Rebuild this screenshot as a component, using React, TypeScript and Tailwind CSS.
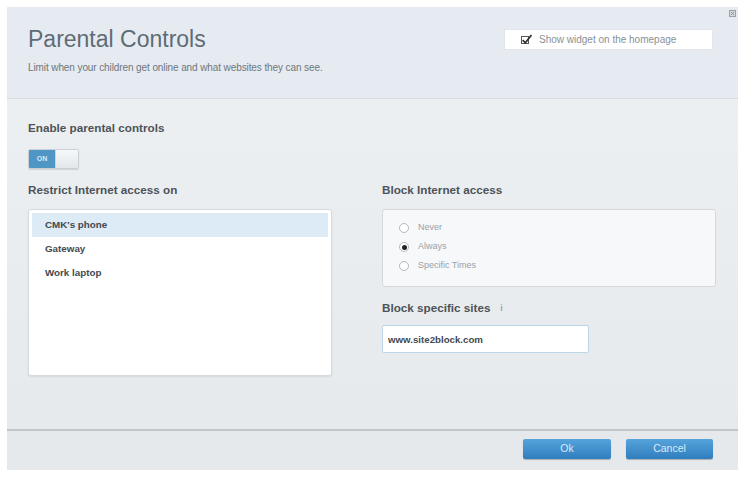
import React, { useState } from 'react'

const devices = ["CMK's phone", 'Gateway', 'Work laptop']
const blockOptions = ['Never', 'Always', 'Specific Times']

export default function App() {
  const [enabled, setEnabled] = useState(true)
  const [selected, setSelected] = useState(0)
  const [block, setBlock] = useState('Always')
  const [showWidget, setShowWidget] = useState(true)
  const [site, setSite] = useState('www.site2block.com')

  return (
    <div className="w-[746px] h-[481px] bg-white pt-[7px] pl-[7px] font-['Liberation_Sans',Arial,sans-serif]">
      <div className="relative w-[731px] h-[463px] flex flex-col bg-gradient-to-b from-[#eef1f3] to-[#e6e9ec]">
        {/* header */}
        <div className="relative h-[92px] shrink-0 bg-[#e5ebf0] border-b border-[#d6dce1] pl-[21px] pt-[19px]">
          <h1 className="text-[23px] leading-[27px] text-[#5f6b77]">Parental Controls</h1>
          <p className="mt-[9px] text-[10px] leading-[12px] tracking-[-0.1px] text-[#6f767d]">
            Limit when your children get online and what websites they can see.
          </p>
          <label className="absolute left-[497px] top-[22px] w-[209px] h-[21px] bg-white border border-[#e2e6ea] flex items-center pl-[16px] gap-[10px] cursor-pointer">
            <span
              onClick={() => setShowWidget(!showWidget)}
              className="relative w-[8px] h-[8px] border border-[#555] bg-white"
            >
              {showWidget && (
                <svg viewBox="0 0 10 10" className="absolute -left-[1px] -top-[3px] w-[11px] h-[11px]">
                  <path d="M1.5 5.5 L4 8 L9.5 1" fill="none" stroke="#333" strokeWidth="1.6" />
                </svg>
              )}
            </span>
            <span className="text-[10px] text-[#8a9096]">Show widget on the homepage</span>
          </label>
          <button className="absolute right-[2px] top-[3px] w-[7px] h-[7px] border border-[#9aa1a8] bg-[#d8dde2] flex items-center justify-center">
            <svg viewBox="0 0 6 6" className="w-[5px] h-[5px]">
              <path d="M1 1 L5 5 M5 1 L1 5" stroke="#7c848b" strokeWidth="1" />
            </svg>
          </button>
        </div>

        {/* body */}
        <div className="flex-1 pl-[21px] pt-[22px]">
          <div className="text-[11.7px] leading-[14px] font-bold text-[#4d5359]">Enable parental controls</div>
          <button
            onClick={() => setEnabled(!enabled)}
            className="mt-[14px] w-[51px] h-[20px] flex rounded-[2px] border border-[#c9cfd4] overflow-hidden shadow-[0_1px_1px_rgba(0,0,0,0.12)]"
          >
            <span className={`w-[26px] h-full flex items-center justify-center text-[7px] font-bold ${enabled ? 'bg-[#5096c5] text-[#dbe9f3]' : 'bg-[#f3f5f7] text-transparent'}`}>
              ON
            </span>
            <span className="flex-1 h-full bg-gradient-to-b from-[#f6f8f9] to-[#e3e7ea] border-l border-[#cfd5da]" />
          </button>

          <div className="mt-[14px] grid grid-cols-[304px_334px] gap-x-[50px]">
            <div>
              <div className="text-[11.7px] leading-[14px] font-bold text-[#4d5359]">Restrict Internet access on</div>
              <div className="mt-[12px] h-[167px] bg-white rounded-[3px] border border-[#d6dbe0] shadow-[0_1px_2px_rgba(0,0,0,0.08)] p-[3px]">
                {devices.map((d, i) => (
                  <div
                    key={d}
                    onClick={() => setSelected(i)}
                    className={`h-[24px] pl-[13px] flex items-center text-[9.8px] font-bold text-[#43494f] cursor-pointer ${selected === i ? 'bg-[#dcebf6]' : ''}`}
                  >
                    {d}
                  </div>
                ))}
              </div>
            </div>

            <div>
              <div className="text-[11.7px] leading-[14px] font-bold text-[#4d5359]">Block Internet access</div>
              <div className="mt-[12px] h-[78px] bg-[#f7f8fa] rounded-[3px] border border-[#d3d8dd] pl-[16px] pt-[13px] flex flex-col gap-[9px]">
                {blockOptions.map(o => (
                  <label key={o} className="flex items-center gap-[9px] h-[10px] cursor-pointer" onClick={() => setBlock(o)}>
                    <span className="w-[10px] h-[10px] rounded-full border border-[#b4bac0] bg-white flex items-center justify-center">
                      {block === o && <span className="w-[5px] h-[5px] rounded-full bg-[#222]" />}
                    </span>
                    <span className="text-[9px] text-[#9aa0a6]">{o}</span>
                  </label>
                ))}
              </div>
              <div className="mt-[14px] flex items-center text-[11.7px] leading-[14px] font-bold text-[#4d5359]">
                Block specific sites
                <span className="ml-[10px] text-[9px] font-normal text-[#7a8188]">i</span>
              </div>
              <input
                value={site}
                onChange={e => setSite(e.target.value)}
                className="mt-[10px] w-[207px] h-[28px] bg-white border border-[#bcd6ea] rounded-[2px] pl-[5px] text-[9.7px] font-bold text-[#43494f] outline-none"
              />
            </div>
          </div>
        </div>

        {/* footer */}
        <div className="h-[41px] shrink-0 border-t-2 border-[#c0c6cb] bg-[#e6e9ec] flex items-center justify-end gap-[15px] pr-[25px] pb-[3px]">
          <button className="w-[88px] h-[20px] rounded-[2px] bg-gradient-to-b from-[#56a4dc] to-[#2f7dbd] shadow-[0_1px_1px_rgba(0,0,0,0.25)] text-[10.5px] text-[#dbeaf6]">
            Ok
          </button>
          <button className="w-[87px] h-[20px] rounded-[2px] bg-gradient-to-b from-[#56a4dc] to-[#2f7dbd] shadow-[0_1px_1px_rgba(0,0,0,0.25)] text-[10.5px] text-[#dbeaf6]">
            Cancel
          </button>
        </div>
      </div>
    </div>
  )
}
